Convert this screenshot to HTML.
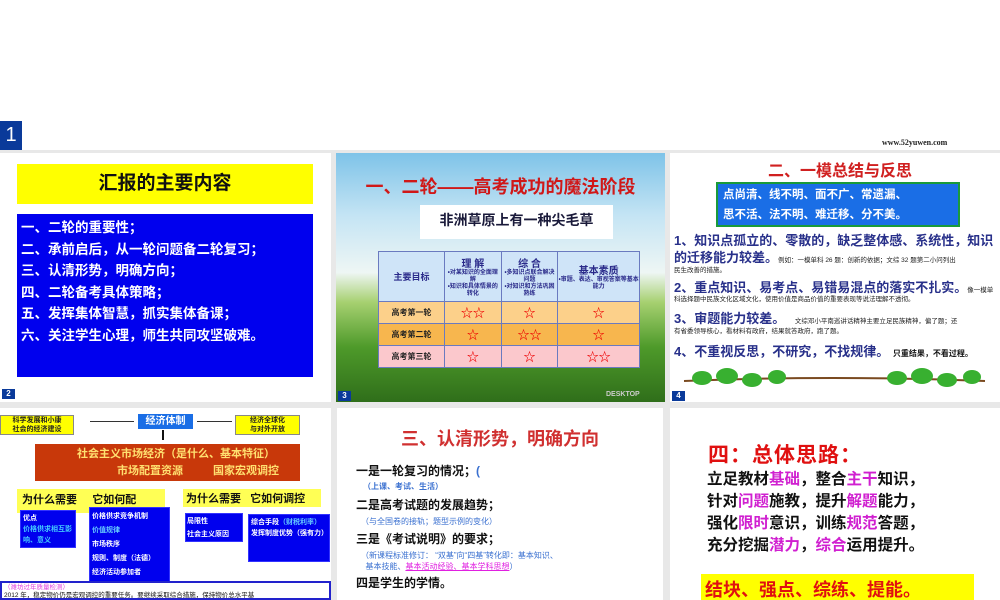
<!DOCTYPE html>
<html><head><meta charset="utf-8"><style>
*{margin:0;padding:0;box-sizing:border-box}
body{width:1000px;height:600px;position:relative;overflow:hidden;background:#fff;font-family:"Liberation Sans","Noto Sans CJK SC",sans-serif;font-weight:bold}
.a{position:absolute}
.s{position:absolute;background:#fff;overflow:hidden}
.num{position:absolute;background:#0a3a9a;color:#fff;font-size:8px;width:13px;height:10px;text-align:center;line-height:10px}
.bl{background:#0000ee;border:1px solid #33f;color:#fff;font-size:11px}
td{border:1px solid #6a7ac0;text-align:center}
.st{color:#e00;font-size:12px}
.sm{font-size:6.5px;color:#222;font-weight:normal}
.it{position:absolute;left:4px;width:326px;color:#28308a;font-size:13px;line-height:16px;white-space:nowrap}
.sl{position:absolute;left:4px;font-size:6.5px;color:#222;font-weight:normal;line-height:8px;white-space:nowrap}
</style></head><body>
<div class="a" style="left:0;top:150px;width:1000px;height:450px;background:#e8e8e8"></div>
<div class="a" style="left:0;top:121px;width:22px;height:29px;background:#0a3a9a;color:#fff;font-size:20px;line-height:29px;text-align:center;font-weight:normal">1</div>
<div class="a" style="left:882px;top:138px;font-size:8px;color:#222;font-family:'Liberation Serif',serif">www.52yuwen.com</div>

<div class="s" style="left:0;top:153px;width:331px;height:249px">
<div class="a" style="left:17px;top:11px;width:296px;height:40px;background:#ffff00;font-size:19px;text-align:center;line-height:40px;color:#111">汇报的主要内容</div>
<div class="a" style="left:17px;top:61px;width:296px;height:163px;background:#0000ee;color:#fff;font-size:13.5px;line-height:21.5px;padding:3px 4px">一、二轮的重要性；<br>二、承前启后，从一轮问题备二轮复习；<br>三、认清形势，明确方向；<br>四、二轮备考具体策略；<br>五、发挥集体智慧，抓实集体备课；<br>六、关注学生心理，师生共同攻坚破难。</div>
<div class="num" style="left:2px;top:236px">2</div>
</div>

<div class="s" style="left:336px;top:153px;width:329px;height:249px;background:linear-gradient(180deg,#7ec3e8 0%,#c4e4f4 25%,#eef6f4 48%,#a6d070 60%,#4e9a2a 78%,#2f6e1a 100%)">
<div class="a" style="left:0;top:20px;width:329px;text-align:center;color:#d01818;font-size:18px">一、二轮——高考成功的魔法阶段</div>
<div class="a" style="left:84px;top:52px;width:193px;height:34px;background:#fff;text-align:center;line-height:30px;font-size:14px;color:#1a1a3a">非洲草原上有一种尖毛草</div>
<table class="a" style="left:42px;top:98px;width:262px;border-collapse:collapse;font-size:8px;color:#222">
<tr style="height:50px;background:#cfe4f8;color:#2a2a8a"><td style="width:66px;font-size:9px">主要目标</td><td style="font-size:10px">理 解<div style="font-size:6px;line-height:7px">•对某知识的全面理解<br>•知识和具体情景的转化</div></td><td style="font-size:10px">综 合<div style="font-size:6px;line-height:7px">•多知识点联合解决问题<br>•对知识和方法巩固熟练</div></td><td style="font-size:10px">基本素质<div style="font-size:6px;line-height:7px">•审题、表达、审视答案等基本能力</div></td></tr>
<tr style="height:22px;background:#fcd08a"><td>高考第一轮</td><td class="st">☆☆</td><td class="st">☆</td><td class="st">☆</td></tr>
<tr style="height:22px;background:#f7b64e"><td>高考第二轮</td><td class="st">☆</td><td class="st">☆☆</td><td class="st">☆</td></tr>
<tr style="height:22px;background:#fbc8cc"><td>高考第三轮</td><td class="st">☆</td><td class="st">☆</td><td class="st">☆☆</td></tr>
</table>
<div class="num" style="left:2px;top:238px">3</div>
<div class="a" style="left:270px;top:238px;font-size:7px;color:#ccc">DESKTOP</div>
</div>

<div class="s" style="left:670px;top:153px;width:330px;height:249px">
<div class="a" style="left:0;top:4px;width:330px;text-align:center;color:#d02020;font-size:16px;padding-left:10px">二、一模总结与反思</div>
<div class="a" style="left:46px;top:29px;width:244px;height:45px;background:#1a6ee6;border:2px solid #1a9a3a;color:#fff;font-size:11.5px;line-height:20px;padding:1px 5px">点尚清、线不明、面不广、常遗漏、<br>思不活、法不明、难迁移、分不美。</div>
<div class="it" style="top:80px">1、知识点孤立的、零散的，缺乏整体感、系统性，知识</div>
<div class="it" style="top:97px">的迁移能力较差。<span class="sm">例如：一模单科 26 题：创新的依据；文综 32 题第二小问列出</span></div>
<div class="sl" style="top:114px">民生改善的措施。</div>
<div class="it" style="top:127px">2、重点知识、易考点、易错易混点的落实不扎实。<span class="sm">像一模单</span></div>
<div class="sl" style="top:143px">科选择题中民族文化区域文化，使用价值是商品价值的重要表现等说法理解不透彻。</div>
<div class="it" style="top:158px">3、审题能力较差。 <span class="sm" style="margin-left:6px">文综邓小平南巡讲话精神主要立足民族精神，偏了题；还</span></div>
<div class="sl" style="top:175px">有省委领导核心，看材料有政府，结果就答政府，跑了题。</div>
<div class="it" style="top:191px">4、不重视反思，不研究，不找规律。 <span style="font-size:8px;color:#111">只重结果，不看过程。</span></div>
<svg class="a" style="left:12px;top:214px" width="305" height="26"><path d="M2 14 Q150 8 303 14" stroke="#7a4a20" stroke-width="2" fill="none"/><g fill="#38b030"><ellipse cx="20" cy="11" rx="10" ry="7"/><ellipse cx="45" cy="9" rx="11" ry="8"/><ellipse cx="70" cy="13" rx="10" ry="7"/><ellipse cx="95" cy="10" rx="9" ry="7"/><ellipse cx="215" cy="11" rx="10" ry="7"/><ellipse cx="240" cy="9" rx="11" ry="8"/><ellipse cx="265" cy="13" rx="10" ry="7"/><ellipse cx="290" cy="10" rx="9" ry="7"/></g></svg>
<div class="num" style="left:2px;top:238px">4</div>
</div>

<div class="s" style="left:0;top:408px;width:331px;height:192px">
<div class="a" style="left:0;top:7px;width:74px;height:20px;background:#ffff00;border:1px solid #888;font-size:7px;text-align:center;line-height:9px;color:#222">科学发展和小康<br>社会的经济建设</div>
<div class="a" style="left:138px;top:6px;width:55px;height:15px;background:#1a6ee6;color:#fff;font-size:10px;text-align:center;line-height:15px">经济体制</div>
<div class="a" style="left:235px;top:7px;width:65px;height:20px;background:#ffff00;border:1px solid #888;font-size:7px;text-align:center;line-height:9px;color:#222">经济全球化<br>与对外开放</div>
<div class="a" style="left:90px;top:13px;width:44px;height:1px;background:#333"></div>
<div class="a" style="left:197px;top:13px;width:35px;height:1px;background:#333"></div>
<div class="a" style="left:162px;top:22px;width:2px;height:10px;background:#111"></div>
<div class="a" style="left:35px;top:36px;width:265px;height:37px;background:#c8380a;color:#ffe070;font-size:11px;line-height:17px;padding:2px 0 0 42px">社会主义市场经济（是什么、基本特征）<br><span style="margin-left:40px">市场配置资源</span><span style="margin-left:30px">国家宏观调控</span></div>
<div class="a" style="left:17px;top:81px;width:148px;height:24px;background:#ffff55;font-size:11px;color:#111;padding:2px 5px">为什么需要 &nbsp; &nbsp; 它如何配</div>
<div class="a" style="left:183px;top:81px;width:138px;height:18px;background:#ffff55;font-size:11px;color:#111;padding:1px 3px">为什么需要 &nbsp; 它如何调控</div>
<div class="a bl" style="left:20px;top:102px;width:56px;height:38px;font-size:7px;line-height:11px;padding:2px">优点<br><span style="color:#4cf">价格供求相互影响、意义</span></div>
<div class="a bl" style="left:89px;top:99px;width:81px;height:82px;font-size:7px;line-height:14px;padding:2px">价格供求竞争机制<br><span style="color:#6cf">价值规律</span><br>市场秩序<br>规则、制度（法德）<br>经济活动参加者</div>
<div class="a bl" style="left:185px;top:105px;width:58px;height:29px;font-size:7px;line-height:13px;padding:1px">局限性<br>社会主义原因</div>
<div class="a bl" style="left:248px;top:106px;width:82px;height:48px;font-size:7px;line-height:11px;padding:2px">综合手段<span style="color:#6cf">（财税利率）</span><br>发挥制度优势（强有力）</div>
<div class="a" style="left:0;top:173px;width:331px;height:19px;border:2px solid #2222cc;background:#fff;font-size:6.5px;line-height:8px;padding:1px 2px;color:#111;font-weight:normal"><span style="color:#e040e0">（潍坊过年质量检测）</span><br>2012 年，稳定物价仍是宏观调控的重要任务。要继续采取综合措施，保持物价总水平基</div>
</div>

<div class="s" style="left:337px;top:408px;width:326px;height:192px">
<div class="a" style="left:0;top:17px;width:326px;text-align:center;color:#d03030;font-size:18px">三、认清形势，明确方向</div>
<div class="a" style="left:19px;top:55px;font-size:12px;color:#111;line-height:16px">一是一轮复习的情况；<span style="color:#3a70d0">(</span></div>
<div class="a" style="left:26px;top:73px;font-size:8px;color:#3a70d0">（上课、考试、生活）</div>
<div class="a" style="left:19px;top:88px;font-size:12px;color:#111">二是高考试题的发展趋势；</div>
<div class="a" style="left:24px;top:108px;font-size:8px;color:#3a70d0;font-weight:normal">（与全国卷的接轨；题型示例的变化）</div>
<div class="a" style="left:19px;top:122px;font-size:12px;color:#111">三是《考试说明》的要求；</div>
<div class="a" style="left:24px;top:142px;width:300px;font-size:8px;line-height:11px;color:#3a70d0;font-weight:normal">（新课程标准修订： “双基”向“四基”转化即：基本知识、<br>&nbsp;&nbsp;基本技能、<span style="color:#e020e0;text-decoration:underline">基本活动经验、基本学科思想</span>）</div>
<div class="a" style="left:19px;top:166px;font-size:12px;color:#111">四是学生的学情。</div>
</div>

<div class="s" style="left:670px;top:408px;width:330px;height:192px">
<div class="a" style="left:38px;top:31px;font-size:21px;color:#e01010;letter-spacing:1px">四：总体思路：</div>
<div class="a" style="left:37px;top:61px;font-size:15.5px;color:#111;line-height:22px">立足教材<span style="color:#d020d0">基础</span>，整合<span style="color:#d020d0">主干</span>知识，<br>针对<span style="color:#d020d0">问题</span>施教，提升<span style="color:#d020d0">解题</span>能力，<br>强化<span style="color:#d020d0">限时</span>意识，训练<span style="color:#d020d0">规范</span>答题，<br>充分挖掘<span style="color:#d020d0">潜力</span>，<span style="color:#d020d0">综合</span>运用提升。</div>
<div class="a" style="left:31px;top:166px;width:273px;height:26px;background:#ffff00;color:#e01010;font-size:18px;padding:2px 4px">结块、强点、综练、提能。</div>
</div>
</body></html>
